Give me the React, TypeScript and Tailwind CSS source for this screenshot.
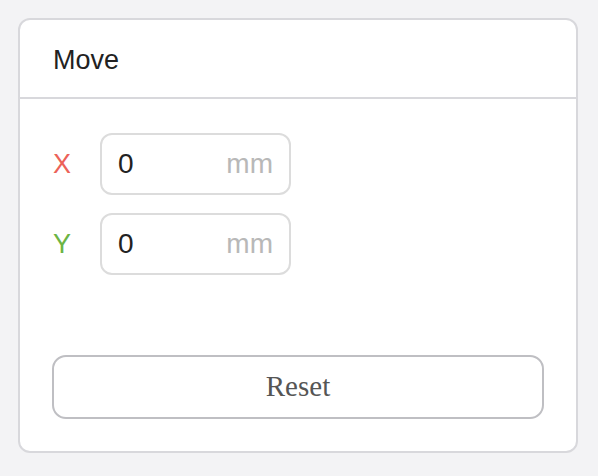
const Field: React.FC<{ label: string; color: string }> = ({ label, color }) => {
    return (
        <div className="flex items-center">
            <span className={`w-[48px] pl-px text-[27px] leading-none ${color}`}>{label}</span>
            <div className="flex items-center justify-between w-[191px] h-[62px] border-2 border-solid border-[#dcdcdc] rounded-[12px] pl-[16px] pr-[16px]">
                <span className="text-[28px] text-[#222]">0</span>
                <span className="text-[28px] text-[#b8b8b8]">mm</span>
            </div>
        </div>
    )
}

const App: React.FC = () => {
    return (
        <div className="w-[598px] h-[476px] bg-[#f3f3f5] pt-[18px] pl-[18px] font-['Liberation_Sans',Arial,sans-serif]">
            <div className="w-[560px] h-[435px] bg-white border-2 border-solid border-[#d8d8dc] rounded-[12px] flex flex-col">
                <div className="h-[79px] border-b-2 border-solid border-[#d8d8dc] flex items-center pl-[33px] pt-[3px]">
                    <span className="text-[27px] text-[#222]">Move</span>
                </div>

                <div className="flex-1 flex flex-col px-[32px] pt-[34px] pb-[32px]">
                    <div className="flex flex-col gap-y-[18px]">
                        <Field label="X" color="text-[#ec6259]" />
                        <Field label="Y" color="text-[#6cb444]" />
                    </div>

                    <button className="mt-auto h-[64px] w-full border-2 border-solid border-[#bfbfc3] rounded-[14px] bg-white text-[29px] text-[#555] font-['Liberation_Serif',serif]">
                        Reset
                    </button>
                </div>
            </div>
        </div>
    )
}

export default App
